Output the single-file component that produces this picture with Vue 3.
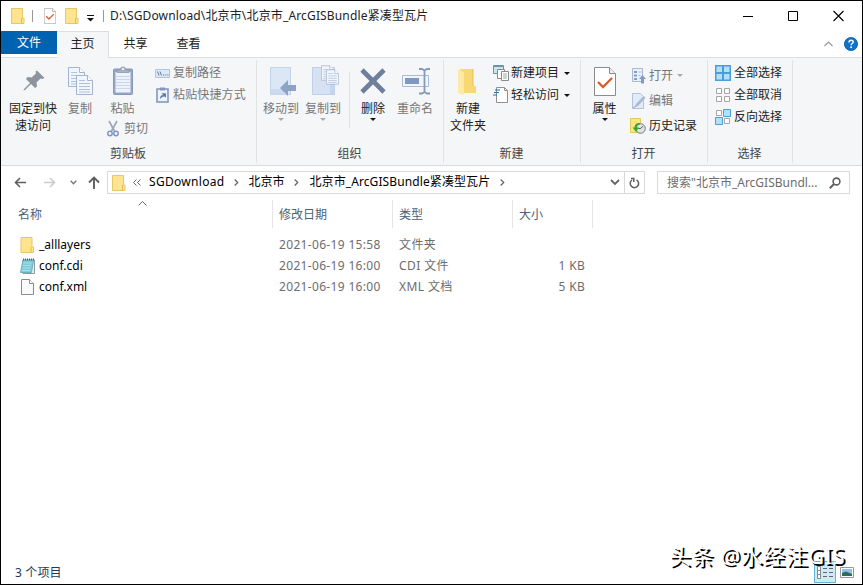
<script setup>
import { ref } from 'vue';

const path = 'D:\\SGDownload\\北京市\\北京市_ArcGISBundle紧凑型瓦片';
const tabs = ['主页', '共享', '查看'];
const active = ref('主页');
const search = '搜索"北京市_ArcGISBundl...';

const files = ref([
  { icon: 'folder', name: '_alllayers', date: '2021-06-19 15:58', type: '文件夹', size: '' },
  { icon: 'note', name: 'conf.cdi', date: '2021-06-19 16:00', type: 'CDI 文件', size: '1 KB' },
  { icon: 'page', name: 'conf.xml', date: '2021-06-19 16:00', type: 'XML 文档', size: '5 KB' },
]);
</script>

<template>
  <!-- shared icons -->
  <svg class="defs" width="0" height="0">
    <symbol id="folder" viewBox="0 0 14 16">
      <path d="M.5.5h11v9.500h1.500v5.500H.5z" fill="#ffe490" stroke="#e9c765" />
      <path d="M10.500 10v5.500" stroke="#e3bc50" />
    </symbol>
    <symbol id="check" viewBox="0 0 22 29">
      <path d="M.5.5h15l6 6v22H.5z" fill="#fff" stroke="#8b8b8b" />
      <path d="M15.500.5v6h6" fill="#eee" stroke="#8b8b8b" />
      <path d="M4 15l5 5 9-9" fill="none" stroke="#d9602b" stroke-width="2.400" />
    </symbol>
    <symbol id="note" viewBox="0 0 15 16">
      <path d="M3 2h11.500v13.500H3z" fill="#e6eef0" stroke="#8b9a9e" />
      <path d="M3 2h10.500l-2 12.500H.5z" fill="#7fcbd9" stroke="#6fb0bd" />
      <path d="M3.500 5h8M3 7.500h8M2.600 10h8M2 12.500h8" stroke="#a9e0e9" />
      <path d="M3 1.500h11" stroke="#566" stroke-width="2" stroke-dasharray="1 1" />
    </symbol>
    <symbol id="page" viewBox="0 0 13 16">
      <path d="M.5.5h8l4 4v11H.5z" fill="#fafafa" stroke="#8c8c8c" />
      <path d="M8.500.5v4h4" fill="#fff" stroke="#8c8c8c" />
    </symbol>
    <symbol id="sheet" viewBox="0 0 17 20">
      <path d="M.5.5h11l5 5v14H.5z" fill="#f1f6fc" stroke="#a3b5d0" />
      <path d="M11.500.5v5h5" fill="#fff" stroke="#a3b5d0" />
      <path d="M3 5.500h6M3 8.500h11M3 11.500h11M3 14.500h11M3 17h11" stroke="#afc1dc" />
    </symbol>
  </svg>

  <div class="window">
    <div class="title">
      <svg class="t-folder" width="14" height="16"><use href="#folder" /></svg>
      <i class="t-sep"></i>
      <svg class="t-check" width="12" height="16"><use href="#check" /></svg>
      <svg class="t-folder2" width="14" height="16"><use href="#folder" /></svg>
      <svg class="t-menu" width="7" height="7" viewBox="0 0 7 7"><path d="M0 .5h7" stroke="#111" /><path d="M0 3h7L3.500 6.500z" fill="#111" /></svg>
      <i class="t-sep last"></i>
      <span class="path">{{ path }}</span>
      <div class="controls">
        <svg width="10" height="11" viewBox="0 0 10 11"><path d="M0 5.500h10" stroke="#000" /></svg>
        <svg width="10" height="11" viewBox="0 0 10 11"><path d="M.5.5h9v9h-9z" fill="none" stroke="#000" /></svg>
        <svg width="11" height="11" viewBox="0 0 11 11"><path d="M.5 0l10 10M10.500 0l-10 10" stroke="#000" stroke-width="1.100" /></svg>
      </div>
    </div>

    <div class="tabs">
      <button class="file">文件</button>
      <button v-for="tab in tabs" :key="tab" class="tab" :class="{ on: tab == active }" @click="active = tab">{{ tab }}</button>
      <div class="tabs-right">
        <svg width="9" height="6" viewBox="0 0 9 6"><path d="M.5 5L4.500 1l4 4" fill="none" stroke="#999" stroke-width="1.200" /></svg>
        <svg width="14" height="14" viewBox="0 0 14 14">
          <circle cx="7" cy="7" r="6.600" fill="#1173c7" stroke="#0a5fa9" stroke-width=".8" />
          <path d="M5 5.400c0-3 4.200-2.700 4.200-.4 0 1.500-2.100 1.500-2.100 3.200" fill="none" stroke="#fff" stroke-width="1.400" />
          <rect x="6.300" y="9.400" width="1.600" height="1.600" fill="#fff" />
        </svg>
      </div>
    </div>

    <div class="ribbon">
      <section class="group clip">
        <div class="items">
          <button class="big pin">
            <svg width="32" height="32" viewBox="0 0 32 32"><path d="M20 4.500l7.500 7.500-2 1-2-.5-4 4 .5 4-2 1.500-4-4-6 6-1.500.5.5-1.500 6-6-4-4 1.500-2 4 .5 4.500-4-.5-2z" fill="#8c959e" /></svg>
            <span>固定到快<br>速访问</span>
          </button>
          <button class="big copy off">
            <svg width="26" height="32" viewBox="0 0 26 32"><use href="#sheet" x="1" y="1" width="17" height="20" /><use href="#sheet" x="9" y="9" width="17" height="20" /></svg>
            <span>复制</span>
          </button>
          <div class="paste-col">
            <button class="big paste off">
              <svg width="22" height="32" viewBox="0 0 22 32">
                <rect x="1.500" y="3" width="19" height="25.500" rx="1" fill="#94a7c6" stroke="#8699ba" />
                <path d="M3.500 6h15v20.500h-15z" fill="#edf3fc" />
                <path d="M4 10.500h14M4 13.500h14M4 16.500h14M4 19.500h14M4 22.500h14" stroke="#cbd7e8" />
                <path d="M5 6.500V4h3c0-4 6-4 6 0h3v2.500z" fill="#a9b3c1" stroke="#8a98ac" stroke-width=".8" />
                <circle cx="11" cy="3" r="1" fill="#fff" />
              </svg>
              <span>粘贴</span>
            </button>
            <button class="small cut off">
              <svg width="12" height="16" viewBox="0 0 12 16">
                <path d="M2 0l5.500 10M10 0L4.500 10" stroke="#9aa7bd" stroke-width="1.700" />
                <circle cx="3" cy="12.500" r="2.200" fill="none" stroke="#7c96c2" stroke-width="1.500" />
                <circle cx="9" cy="12.500" r="2.200" fill="none" stroke="#7c96c2" stroke-width="1.500" />
              </svg>
              <span>剪切</span>
            </button>
          </div>
          <div class="list">
            <button class="small off">
              <svg width="15" height="14" viewBox="0 0 15 14"><path d="M.5 3.500h14v8H.5z" fill="#dde8f8" stroke="#b1c3de" /><path d="M2.500 5.500l1.500 4M5 5.500l1.500 4M8 9h1.200M10.200 9h1.200M12.400 9h1" stroke="#5e79a5" /></svg>
              <span>复制路径</span>
            </button>
            <button class="small off">
              <svg width="15" height="16" viewBox="0 0 15 16"><rect x="2" y="2" width="11" height="13" fill="#eef4fc" stroke="#8598bb" stroke-width="1.600" /><path d="M5 .5h5v3H5z" fill="#8598bb" /><path d="M5 12c0-3 1-4 3-4L6.500 6.200H11v4.500L9.600 9.400C7.500 9.500 6.500 10.500 5 12z" fill="#5d7db0" /></svg>
              <span class="wide">粘贴快捷方式</span>
            </button>
          </div>
        </div>
        <h6>剪贴板</h6>
      </section>

      <section class="group org">
        <div class="items">
          <button class="big w38 off">
            <svg width="30" height="32" viewBox="-2 0 30 32"><path d="M2.500 1.500h20v27h-20z" fill="#dce7f6" stroke="#c2d2e9" /><path d="M3 23h13v5.500H3z" fill="#cbdaf0" /><path d="M12 22l8-8v5h8v6h-8v5z" fill="#8da2c4" /></svg>
            <span>移动到</span><i class="arr"></i>
          </button>
          <button class="big w38 off">
            <svg width="30" height="32" viewBox="-2 0 30 32"><path d="M2.500 1.500h22v27h-22z" fill="#d6e2f4" stroke="#bfd0e8" /><path d="M20 17h4.500v11H20z" fill="#c4d5ee" /><use href="#sheet" x="11" y="-1" width="13" height="16" /><use href="#sheet" x="16" y="3" width="13" height="16" /></svg>
            <span>复制到</span><i class="arr"></i>
          </button>
          <i class="rule"></i>
          <button class="big del">
            <svg width="28" height="32" viewBox="0 0 28 32"><path d="M3 4l22 22M25 4L3 26" stroke="#6e7f9d" stroke-width="4.600" /></svg>
            <span>删除</span><i class="arr"></i>
          </button>
          <button class="big w38 off">
            <svg width="30" height="32" viewBox="-1 0 30 32"><path d="M1.500 9.500h26v11h-26z" fill="#f2f6fc" stroke="#aabbd5" /><path d="M4 12h14v6H4z" fill="#8198be" /><path d="M18 3h3l2.500 1.500L26 3h3M18 27.500h3l2.500-1.500 2.500 1.500h3M23.500 5v21" fill="none" stroke="#8799b8" stroke-width="1.800" /></svg>
            <span>重命名</span>
          </button>
        </div>
        <h6>组织</h6>
      </section>

      <section class="group new">
        <div class="items">
          <button class="big w38">
            <svg width="24" height="32" viewBox="0 0 24 32"><path d="M4 3h13v17h3v7H4z" fill="#f8d775" /><path d="M2 3l6 3v23l-6-2z" fill="#ffe9a6" /><path d="M17 3v17" stroke="#e9c155" /></svg>
            <span>新建<br>文件夹</span>
          </button>
          <div class="list">
            <button class="small">
              <svg width="16" height="16" viewBox="0 0 16 16"><path d="M.5.5h10v8H.5z" fill="#c8e4f1" stroke="#7390a3" /><path d="M1 1.500h9" stroke="#6598b5" /><path d="M4.500 4.500h7v9h-7z" fill="#fff" stroke="#8a8a8a" /><path d="M8.500 6.500h7v9h-7z" fill="#fff" stroke="#8a8a8a" /><path d="M10 9h4M10 11h4M10 13h4" stroke="#9aa" /></svg>
              <span>新建项目</span><i class="arr"></i>
            </button>
            <button class="small">
              <svg width="16" height="16" viewBox="0 0 16 16"><path d="M3.500.5h8l3 3v12h-11z" fill="#fff" stroke="#909090" /><path d="M11.500.5v3h3" fill="none" stroke="#909090" /><path d="M2 3h5M1 5.500h5M0 8h4" stroke="#2f71a5" stroke-width="1.200" /></svg>
              <span>轻松访问</span><i class="arr"></i>
            </button>
          </div>
        </div>
        <h6>新建</h6>
      </section>

      <section class="group open">
        <div class="items">
          <button class="big prop">
            <svg width="22" height="32" viewBox="0 0 22 32"><use href="#check" y="1" width="22" height="29" /></svg>
            <span>属性</span><i class="arr"></i>
          </button>
          <div class="list">
            <button class="small off">
              <svg width="16" height="16" viewBox="0 0 16 16"><path d="M2.500.5h10v13h-10z" fill="#eaf1fb" stroke="#a8b9d4" /><path d="M4 3h3v2H4zM4 6.500h3v2H4zM4 10h3v2H4z" fill="#869cc1" /><path d="M8.500 4h3M8.500 7.500h2" stroke="#a8b9d4" /><path d="M9 11l3.500-4 3.500 4h-2v4.500h-3V11z" fill="#829abf" /></svg>
              <span>打开</span><i class="arr"></i>
            </button>
            <button class="small off">
              <svg width="16" height="16" viewBox="0 0 16 16"><path d="M2.500.5h8l3 3v12h-11z" fill="#e2ecf9" stroke="#b3c2da" /><path d="M5 14l1-3 7.500-8 2 2L8 13z" fill="#a9bad4" /><path d="M3 15l3-2" stroke="#8fa2c0" /></svg>
              <span>编辑</span>
            </button>
            <button class="small">
              <svg width="16" height="16" viewBox="0 0 16 16"><path d="M.5.5h10v14H.5z" fill="#ffe680" stroke="#e3c75b" /><circle cx="10.500" cy="10.500" r="4.800" fill="#dfe2e4" stroke="#767b80" /><path d="M10.500 10.500l2.300-2M10.500 10.500H8.500" stroke="#555" /><path d="M10 5C6 4.500 4.500 7 4.500 9.500H2.500L6 14l3-4.500H7C7 7.500 8 6.500 10 6.500z" fill="#35a93d" /></svg>
              <span>历史记录</span>
            </button>
          </div>
        </div>
        <h6>打开</h6>
      </section>

      <section class="group select">
        <div class="items">
          <div class="list">
            <button class="small">
              <svg width="16" height="16" viewBox="0 0 16 16"><path d="M0 0h16v16H0z" fill="#4a9fd6" /><path d="M1.500 1.500h5.500v5.500H1.500zM9 1.500h5.500v5.500H9zM1.500 9h5.500v5.500H1.500zM9 9h5.500v5.500H9z" fill="#b4dffa" /></svg>
              <span>全部选择</span>
            </button>
            <button class="small">
              <svg width="16" height="16" viewBox="0 0 16 16"><path d="M1.500 1.500h5v5h-5zM9.500 1.500h5v5h-5zM1.500 9.500h5v5h-5zM9.500 9.500h5v5h-5z" fill="#fff" stroke="#a5a5a5" /></svg>
              <span>全部取消</span>
            </button>
            <button class="small">
              <svg width="16" height="16" viewBox="0 0 16 16"><path d="M1.500 1.500h5v5h-5zM9.500 9.500h5v5h-5z" fill="#fff" stroke="#a5a5a5" /><path d="M8.500.5h7v7h-7zM.5 8.500h7v7h-7z" fill="#b4dffa" stroke="#4a9fd6" /></svg>
              <span>反向选择</span>
            </button>
          </div>
        </div>
        <h6>选择</h6>
      </section>
    </div>

    <div class="nav">
      <svg class="back" width="12" height="11" viewBox="0 0 12 11"><path d="M12 5.500H1.500M6 1L1.500 5.500 6 10" fill="none" stroke="#5f5f5f" stroke-width="1.600" /></svg>
      <svg class="fwd" width="12" height="11" viewBox="0 0 12 11"><path d="M0 5.500h10.500M6 1l4.500 4.500L6 10" fill="none" stroke="#ccc" stroke-width="1.600" /></svg>
      <svg class="recent" width="7" height="5" viewBox="0 0 7 5"><path d="M.7.7l2.800 3 2.800-3" fill="none" stroke="#777" stroke-width="1.400" /></svg>
      <svg class="up" width="12" height="13" viewBox="0 0 12 13"><path d="M6 13V1.500M1 6.500l5-5 5 5" fill="none" stroke="#5f5f5f" stroke-width="1.900" /></svg>
      <div class="address">
        <svg class="a-folder" width="14" height="16"><use href="#folder" /></svg>
        <svg class="more" width="8" height="7" viewBox="0 0 8 7"><path d="M3.500.5l-3 3 3 3M7.500.5l-3 3 3 3" fill="none" stroke="#666" /></svg>
        <span class="crumb c1">SGDownload</span>
        <svg class="next" width="5" height="7" viewBox="0 0 5 7"><path d="M.7.5l3 3-3 3" fill="none" stroke="#666" stroke-width="1.300" /></svg>
        <span class="crumb c2">北京市</span>
        <svg class="next" width="5" height="7" viewBox="0 0 5 7"><path d="M.7.5l3 3-3 3" fill="none" stroke="#666" stroke-width="1.300" /></svg>
        <span class="crumb c3">北京市_ArcGISBundle紧凑型瓦片</span>
        <svg class="next" width="5" height="7" viewBox="0 0 5 7"><path d="M.7.5l3 3-3 3" fill="none" stroke="#666" stroke-width="1.300" /></svg>
        <svg class="drop" width="10" height="7" viewBox="0 0 10 7"><path d="M1 1l4 4 4-4" fill="none" stroke="#666" stroke-width="1.800" /></svg>
        <div class="refresh">
          <svg width="11" height="12" viewBox="0 0 11 12"><path d="M7.500 2.800A4.200 4.200 0 1 1 3 3M2 1.500h2.800v3.500" fill="none" stroke="#5f5f5f" stroke-width="1.500" /></svg>
        </div>
      </div>
      <div class="search">
        <span>{{ search }}</span>
        <svg width="12" height="12" viewBox="0 0 12 12"><circle cx="7.500" cy="4.500" r="3.400" fill="none" stroke="#5f5f5f" stroke-width="1.600" /><path d="M5 7L.8 11.200" stroke="#5f5f5f" stroke-width="2" /></svg>
      </div>
    </div>

    <div class="row head">
      <span class="name">名称<svg width="9" height="5" viewBox="0 0 9 5"><path d="M.5 4.500l4-4 4 4" fill="none" stroke="#666" /></svg></span>
      <span>修改日期</span>
      <span>类型</span>
      <span>大小</span>
    </div>
    <div class="files">
      <div v-for="file in files" :key="file.name" class="row">
        <span class="name"><svg width="15" height="16"><use :href="'#' + file.icon" /></svg>{{ file.name }}</span>
        <span class="date">{{ file.date }}</span>
        <span class="type">{{ file.type }}</span>
        <span class="size">{{ file.size }}</span>
      </div>
    </div>

    <div class="status">
      <span>{{ files.length }} 个项目</span>
      <div class="views">
        <div class="details">
          <svg width="17" height="13" viewBox="0 0 17 13"><path d="M.5.5h3v12h-3zM.5 4.500h3M.5 8.500h3" fill="#fff" stroke="#888" /><path d="M6 2.500h4M6 6.500h4M6 10.500h4M12 2.500h4M12 6.500h4M12 10.500h4" stroke="#666" /></svg>
        </div>
        <svg width="14" height="11" viewBox="0 0 14 11"><path d="M.5.5h13v10H.5z" fill="#fff" stroke="#999" /><path d="M2 2h10v7H2z" fill="#8ec5ea" /><path d="M2 6l4-1.500L12 7v2H2z" fill="#33695c" /></svg>
      </div>
    </div>
    <div class="watermark">头条 @水经注GIS</div>
  </div>
</template>

<style>
body { background: #fff; overflow: hidden; }
</style>

<style scoped>
.defs { position: absolute; }
.window {
  position: relative; box-sizing: border-box; width: 863px; height: 585px;
  border: 1px solid #000; background: #fff; color: #222;
  display: flex; flex-direction: column;
  font: 12px/16px "Noto Sans", "Noto Sans CJK SC", sans-serif; white-space: nowrap;
}
svg { display: block; flex: none; overflow: visible; }
button { border: 0; padding: 0; margin: 0; background: none; font: inherit; color: inherit; }

.title { height: 30px; display: flex; align-items: center; flex: none; }
.t-folder { margin-left: 10px; }
.t-sep { width: 1px; height: 12px; background: #999; margin-left: 7px; }
.t-sep.last { margin-left: 4px; }
.t-check { margin-left: 11px; }
.t-folder2 { margin-left: 9px; }
.t-menu { margin: 4px 5px 0 8px; }
.path { margin-left: 6px; letter-spacing: 0.15px; }
.controls { margin-left: auto; display: flex; gap: 35px; padding-right: 18px; }

.tabs { height: 26px; display: flex; flex: none; }
.file { width: 56px; height: 23px; background: #0063b1; color: #fff; }
.tab { width: 53px; height: 25px; }
.tab.on {
  box-sizing: border-box; width: 52px; height: 27px; padding-bottom: 2px; z-index: 1;
  background: #f5f6f7; border: 1px solid #dcdde0; border-bottom: 0; border-left: 0;
}
.tabs-right { margin-left: auto; display: flex; align-items: center; gap: 11px; padding-right: 4px; }

.ribbon { height: 109px; box-sizing: border-box; flex: none; display: flex;
  background: #f5f6f7; border-top: 1px solid #dcdde0; border-bottom: 1px solid #d9dadb; }
.group { box-sizing: border-box; height: 103px; margin-top: 2px; border-right: 1px solid #e1e2e4;
  display: flex; flex-direction: column; }
.items { flex: 1; display: flex; }
h6 { margin: 0; font: inherit; line-height: 16px; text-align: center; color: #444; padding: 0 1px 1px 0; }
.clip { width: 256px; }
.org { width: 187px; }
.new { width: 137px; }
.open { width: 127px; }
.select { width: 85px; }

.big { display: flex; flex-direction: column; align-items: center; align-self: flex-start;
  padding-top: 6px; line-height: 17px; }
.big span { margin-top: 2px; }
.small { display: flex; align-items: center; height: 22px; gap: 3px; }
.off { color: #777; }
.arr { width: 0; height: 0; border: 3px solid transparent; border-bottom: 0; border-top-color: #111; }
.off .arr { border-top-color: #aaa; }
.big .arr { margin-top: 1px; }
.small .arr { margin-left: 1px; }
.list { display: flex; flex-direction: column; }
.w38 { width: 38px; }

.pin { width: 50px; margin-left: 7px; }
.copy { width: 26px; margin-left: 9px; }
.paste-col { width: 44px; margin-left: 14px; }
.paste { width: 27px; margin-left: 2px; }
.cut { gap: 5px; margin-top: 1px; }
.clip .list { margin: 2px 0 0 4px; }
.wide { letter-spacing: 0.15px; }
.org .items { padding-left: 5px; }
.org .w38 + .w38 { margin-left: 4px; }
.rule { width: 1px; height: 56px; background: #dfe0e2; margin: 12px 10px 0 7px; }
.del { width: 26px; margin-right: 10px; }
.new .items { padding-left: 5px; }
.new .list { margin: 2px 0 0 6px; }
.new .small { gap: 2px; }
.new .arr { margin-left: 3px; }
.open .items { padding-left: 11px; }
.prop { width: 25px; }
.open .list { margin: 3px 0 0 13px; }
.open .small { height: 25px; }
.select .items { padding-left: 7px; }
.select .list { margin-top: 2px; }

.nav { height: 33px; flex: none; display: flex; align-items: center; }
.back { margin-left: 13px; }
.fwd { margin-left: 18px; }
.recent { margin-left: 14px; }
.up { margin-left: 11px; }
.address { box-sizing: border-box; width: 538px; height: 23px; margin-left: 7px;
  border: 1px solid #d9d9d9; display: flex; align-items: center; }
.a-folder { margin-left: 4px; }
.more { margin-left: 7px; }
.crumb { margin: -1px 0 0 8px; color: #000; }
.c1 { letter-spacing: 0.3px; }
.c2 { margin-left: 9px; }
.c3 { margin-left: 10px; letter-spacing: 0.1px; }
.next { margin-left: 10px; }
.drop { margin-left: auto; }
.refresh { box-sizing: border-box; width: 20px; height: 21px; margin-left: 4px;
  border-left: 1px solid #d9d9d9; display: flex; align-items: center; justify-content: center; }
.search { box-sizing: border-box; width: 193px; height: 23px; margin-left: 12px; padding: 0 8px 0 9px;
  border: 1px solid #d9d9d9; color: #6d6d6d; display: flex; align-items: center; justify-content: space-between; }

.row { display: grid; grid-template-columns: 272px 120px 120px 80px; height: 21px; align-items: center; color: #6d6d6d; }
.row > span { padding-left: 6px; }
.row .name { padding-left: 19px; display: flex; align-items: center; gap: 4px; color: #000; }
.row .date { letter-spacing: 0.33px; }
.row .type { letter-spacing: 0.4px; }
.row .size { text-align: right; padding-right: 8px; letter-spacing: 0.3px; }
.head { height: 28px; margin-top: 1px; flex: none; }
.head > span { box-sizing: border-box; height: 28px; line-height: 30px; border-right: 1px solid #e5e5e5; color: #4c607a; }
.head .name { padding: 1px 0 0 17px; color: #4c607a; }
.head svg { margin: -23px 0 0 92px; }
.files { padding-top: 6px; }

.status { margin-top: auto; height: 24px; display: flex; align-items: center; justify-content: space-between;
  padding: 0 8px 0 14px; color: #1e395b; }
.status > span { padding-top: 2px; letter-spacing: 0.15px; }
.views { display: flex; align-items: center; gap: 4px; }
.details { box-sizing: border-box; width: 22px; height: 22px; border: 1px solid #5fb6d8; background: #cdeaf6;
  display: flex; align-items: center; justify-content: center; }
.watermark { position: absolute; right: 17px; bottom: 13px; color: #fff;
  font-size: 22px; line-height: 32px; letter-spacing: 0.5px; text-shadow: 2px 2px 0 #000; }
</style>
